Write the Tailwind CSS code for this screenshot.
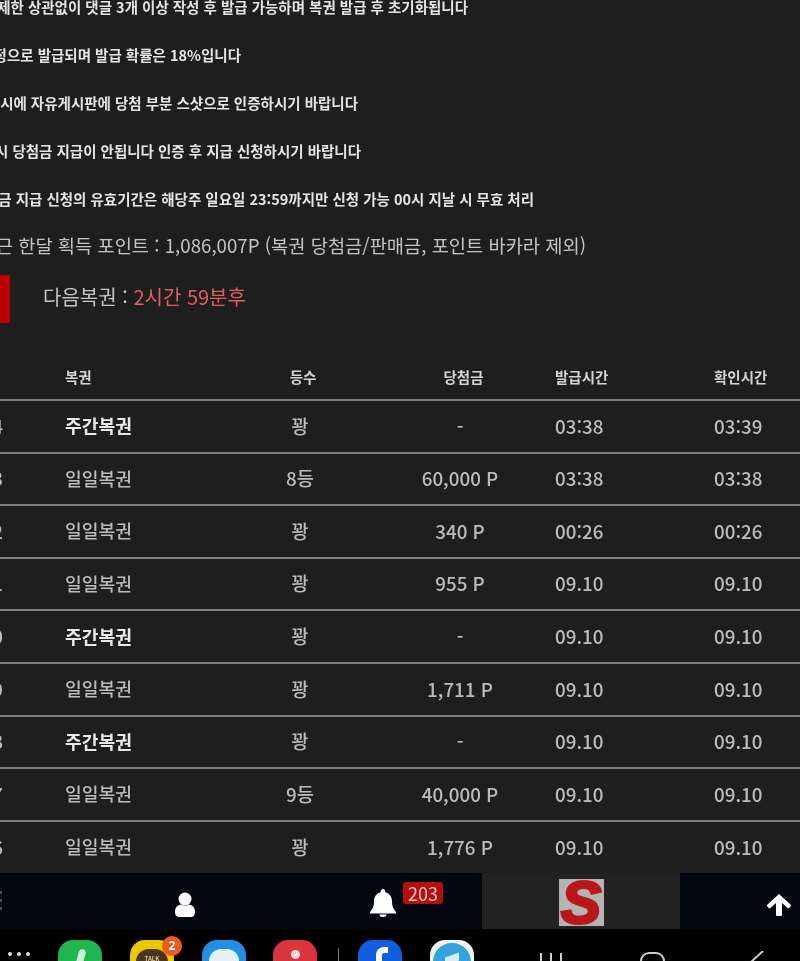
<!DOCTYPE html>
<html lang="ko">
<head>
  <meta charset="UTF-8">
  <meta name="viewport" content="width=device-width, initial-scale=1.0">
  <title>복권</title>
  <script src="https://cdn.jsdelivr.net/npm/@tailwindcss/browser@4"></script>
</head>
<body class="bg-black">
  <div class="w-[800px] h-[961px] overflow-hidden flex flex-col blur-[0.7px] font-['Noto_Sans_CJK_KR','Noto_Sans',sans-serif]">

    <main class="h-[873px] shrink-0 bg-[#1e1e1e] flex flex-col">
      <!-- notices -->
      <div class="flex flex-col gap-[28px] text-[14.5px] leading-[20px] font-bold text-[#e4e4e4] whitespace-nowrap -mt-[3px]">
        <p class="w-[468px] flex justify-end">제한 상관없이 댓글 3개 이상 작성 후 발급 가능하며 복권 발급 후 초기화됩니다</p>
        <p class="w-[241px] flex justify-end">정으로 발급되며 발급 확률은 18%입니다</p>
        <p class="w-[358px] flex justify-end">당첨 시에 자유게시판에 당첨 부분 스샷으로 인증하시기 바랍니다</p>
        <p class="w-[361px] flex justify-end">안할 시 당첨금 지급이 안됩니다 인증 후 지급 신청하시기 바랍니다</p>
        <p class="w-[534px] flex justify-end">당첨금 지급 신청의 유효기간은 해당주 일요일 23:59까지만 신청 가능 00시 지날 시 무효 처리</p>
      </div>
      <p class="w-[586px] flex justify-end mt-[23px] text-[18.7px] leading-[26px] text-[#c4c4c4] whitespace-nowrap">최근 한달 획득 포인트 : 1,086,007P (복권 당첨금/판매금, 포인트 바카라 제외)</p>

      <div class="flex items-center mt-[17px] h-[48px]">
        <div class="w-[10px] h-[48px] bg-[#bb0000]"></div>
        <p class="ml-[33px] mb-[4px] text-[20px] text-[#c4c4c4]">다음복권 : <span class="text-[#e05f5f]">2시간 59분후</span></p>
      </div>

      <!-- table -->
      <div class="mt-[31px] flex flex-col text-[18.8px] font-medium text-[#bcbcbc] whitespace-nowrap">
        <div class="h-[47px] grid grid-cols-[65px_170px_130px_190px_159px_86px] items-center text-[14.5px] font-bold text-[#d4d4d4] border-b-2 border-[#7d7d7d]">
          <span></span><span>복권</span><span class="pl-[6px] text-center">등수</span><span class="pl-[7px] text-center">당첨금</span><span>발급시간</span><span>확인시간</span>
        </div>
        <div class="h-[52.6px] pb-[1px] grid grid-cols-[65px_170px_130px_190px_159px_86px] items-center border-b-2 border-[#7d7d7d]">
          <span class="w-[3px] flex justify-end">554</span><span class="text-[18.2px] font-bold text-[#e8e8e8]">주간복권</span><span class="text-center">꽝</span><span class="text-center">-</span><span>03:38</span><span>03:39</span>
        </div>
        <div class="h-[52.6px] pb-[1px] grid grid-cols-[65px_170px_130px_190px_159px_86px] items-center border-b-2 border-[#7d7d7d]">
          <span class="w-[3px] flex justify-end">553</span><span class="text-[18.2px]">일일복권</span><span class="text-center">8등</span><span class="text-center">60,000 P</span><span>03:38</span><span>03:38</span>
        </div>
        <div class="h-[52.6px] pb-[1px] grid grid-cols-[65px_170px_130px_190px_159px_86px] items-center border-b-2 border-[#7d7d7d]">
          <span class="w-[3px] flex justify-end">552</span><span class="text-[18.2px]">일일복권</span><span class="text-center">꽝</span><span class="text-center">340 P</span><span>00:26</span><span>00:26</span>
        </div>
        <div class="h-[52.6px] pb-[1px] grid grid-cols-[65px_170px_130px_190px_159px_86px] items-center border-b-2 border-[#7d7d7d]">
          <span class="w-[3px] flex justify-end">551</span><span class="text-[18.2px]">일일복권</span><span class="text-center">꽝</span><span class="text-center">955 P</span><span>09.10</span><span>09.10</span>
        </div>
        <div class="h-[52.6px] pb-[1px] grid grid-cols-[65px_170px_130px_190px_159px_86px] items-center border-b-2 border-[#7d7d7d]">
          <span class="w-[3px] flex justify-end">550</span><span class="text-[18.2px] font-bold text-[#e8e8e8]">주간복권</span><span class="text-center">꽝</span><span class="text-center">-</span><span>09.10</span><span>09.10</span>
        </div>
        <div class="h-[52.6px] pb-[1px] grid grid-cols-[65px_170px_130px_190px_159px_86px] items-center border-b-2 border-[#7d7d7d]">
          <span class="w-[3px] flex justify-end">549</span><span class="text-[18.2px]">일일복권</span><span class="text-center">꽝</span><span class="text-center">1,711 P</span><span>09.10</span><span>09.10</span>
        </div>
        <div class="h-[52.6px] pb-[1px] grid grid-cols-[65px_170px_130px_190px_159px_86px] items-center border-b-2 border-[#7d7d7d]">
          <span class="w-[3px] flex justify-end">548</span><span class="text-[18.2px] font-bold text-[#e8e8e8]">주간복권</span><span class="text-center">꽝</span><span class="text-center">-</span><span>09.10</span><span>09.10</span>
        </div>
        <div class="h-[52.6px] pb-[1px] grid grid-cols-[65px_170px_130px_190px_159px_86px] items-center border-b-2 border-[#7d7d7d]">
          <span class="w-[3px] flex justify-end">547</span><span class="text-[18.2px]">일일복권</span><span class="text-center">9등</span><span class="text-center">40,000 P</span><span>09.10</span><span>09.10</span>
        </div>
        <div class="h-[51px] pb-[1px] grid grid-cols-[65px_170px_130px_190px_159px_86px] items-center">
          <span class="w-[3px] flex justify-end">546</span><span class="text-[18.2px]">일일복권</span><span class="text-center">꽝</span><span class="text-center">1,776 P</span><span>09.10</span><span>09.10</span>
        </div>
      </div>
    </main>

    <!-- bottom nav -->
    <nav class="h-[56px] shrink-0 bg-[#02070f] flex">
      <div class="w-[86px] shrink-0 flex flex-col justify-center gap-[5px] pb-[1px]">
        <div class="w-[2px] h-[3px] bg-[#555]"></div>
        <div class="w-[2px] h-[3px] bg-[#555]"></div>
        <div class="w-[2px] h-[3px] bg-[#555]"></div>
      </div>
      <div class="w-[198px] shrink-0 flex items-center justify-center pt-[6px]">
        <svg class="w-[20px] h-[25px]" viewBox="0 0 20 25" fill="#fff"><circle cx="10" cy="7" r="6.5"/><path d="M0 20c0-5 3-7 6-7.500 2.500 1.500 5.500 1.500 8 0 3 .5 6 2.500 6 7.500 0 3-1.500 5-4 5H4c-2.500 0-4-2-4-5z"/></svg>
      </div>
      <div class="relative w-[198px] shrink-0 flex items-center justify-center pt-[4px]">
        <svg class="w-[26px] h-[28px]" viewBox="0 0 26 28" fill="#fff"><path d="M13 0c1.300 0 2.300 1 2.300 2.300v1C19.500 4.300 22 8 22 12c0 6 1.500 8 4 11 .5 .8 0 1.500-1 1.500H1c-1 0-1.500-.7-1-1.500 2.500-3 4-5 4-11 0-4 2.500-7.700 6.700-8.700v-1C10.700 1 11.700 0 13 0z"/><path d="M9.500 25.500h7a3.500 2.500 0 0 1-7 0z"/></svg>
        <span class="absolute left-[119px] top-[9px] w-[40px] h-[22px] rounded-[3px] bg-[#b30f0f] text-[#eec4c4] text-[18px] leading-[22px] text-center">203</span>
      </div>
      <div class="w-[198px] shrink-0 bg-[#222222] flex items-center justify-center pt-[2px]">
        <div class="w-[45px] h-[47px] bg-[#b4b4b4] overflow-hidden flex items-center justify-center">
          <span class="text-[60px] leading-[47px] font-bold italic font-['Liberation_Sans',sans-serif] text-[#b81818] [-webkit-text-stroke:3px_#b81818]">S</span>
        </div>
      </div>
      <div class="w-[198px] shrink-0 flex items-center justify-center pt-[7px]">
        <svg class="w-[24px] h-[22px]" viewBox="0 0 24 22" fill="#fff"><path d="M12 0l11.500 10.500c.7.7.7 1.500 0 2.200l-1 1c-.7.7-1.500.7-2.200 0L15 9v11.500c0 1-.5 1.500-1.500 1.500h-3c-1 0-1.500-.5-1.500-1.500V9l-5.300 4.700c-.7.7-1.500.7-2.200 0l-1-1c-.7-.7-.7-1.500 0-2.200z"/></svg>
      </div>
    </nav>

    <!-- android dock, cut off by the bottom of the screenshot -->
    <footer class="h-[32px] shrink-0 bg-black flex overflow-hidden">
      <div class="w-[58px] shrink-0 flex gap-[5px] pl-[8px] pt-[23px]">
        <div class="w-[4px] h-[4px] rounded-full bg-[#ddd]"></div>
        <div class="w-[4px] h-[4px] rounded-full bg-[#ddd]"></div>
        <div class="w-[4px] h-[4px] rounded-full bg-[#ddd]"></div>
      </div>
      <div class="w-[44px] h-[44px] shrink-0 mt-[11px] rounded-[15px] bg-[#1fb550] flex justify-center pt-[9px]">
        <div class="w-[7px] h-[20px] rounded-full bg-[#cfeed8] rotate-[15deg]"></div>
      </div>
      <div class="relative w-[44px] h-[44px] shrink-0 mt-[11px] ml-[28px] rounded-[15px] bg-[#e9c800] flex justify-center pt-[9px]">
        <div class="w-[32px] h-[26px] rounded-full bg-[#4d3321] text-[6px] leading-[20px] font-bold text-center text-[#d8c98f]">TALK</div>
      </div>
      <div class="w-[44px] h-[44px] shrink-0 mt-[11px] ml-[28px] rounded-[15px] bg-[#1f8fe8] flex justify-center pt-[9px]">
        <div class="w-[30px] h-[24px] rounded-full bg-[#e6f2fb]"></div>
      </div>
      <div class="w-[44px] h-[44px] shrink-0 mt-[11px] ml-[27px] rounded-[15px] bg-[#d8363c] flex justify-center pt-[10px]">
        <div class="w-[9px] h-[9px] rounded-full bg-[#f7dfe0]"></div>
      </div>
      <div class="w-[1px] h-[14px] shrink-0 mt-[19px] ml-[21px] bg-[#777]"></div>
      <div class="w-[44px] h-[44px] shrink-0 mt-[11px] ml-[19px] rounded-[15px] bg-[#0f5fe0] flex justify-center pt-[7px]">
        <div class="w-[12px] h-[16px] border-l-[6px] border-t-[6px] border-white rounded-tl-[8px] ml-[4px]"></div>
      </div>
      <div class="w-[44px] h-[44px] shrink-0 mt-[11px] ml-[28px] rounded-[15px] bg-[#eef3f6] flex items-center justify-center">
        <div class="w-[38px] h-[38px] rounded-full bg-[#37a3dc] flex justify-center pt-[12px]">
          <div class="w-[14px] h-[8px] bg-white/80 skew-y-[-20deg]"></div>
        </div>
      </div>
      <div class="flex gap-[8px] shrink-0 ml-[66px] pt-[24px]">
        <div class="w-[2px] h-[8px] bg-[#ccc]"></div>
        <div class="w-[2px] h-[8px] bg-[#ccc]"></div>
        <div class="w-[2px] h-[8px] bg-[#ccc]"></div>
      </div>
      <div class="w-[25px] h-[24px] shrink-0 mt-[23px] ml-[78px] rounded-[9px] border-2 border-[#ccc]"></div>
      <svg class="w-[24px] h-[12px] shrink-0 mt-[22px] ml-[76px]" viewBox="0 0 24 12" fill="none" stroke="#ccc" stroke-width="2"><path d="M22 0L10 11"/></svg>
    </footer>
  </div>

  <!-- kakao badge sits over the dock icon -->
  <div class="absolute left-[162px] top-[936px] w-[20px] h-[20px] rounded-full bg-[#ee5a1f] text-white text-[12px] leading-[20px] font-bold text-center font-['Noto_Sans',sans-serif] blur-[0.5px]">2</div>
</body>
</html>
